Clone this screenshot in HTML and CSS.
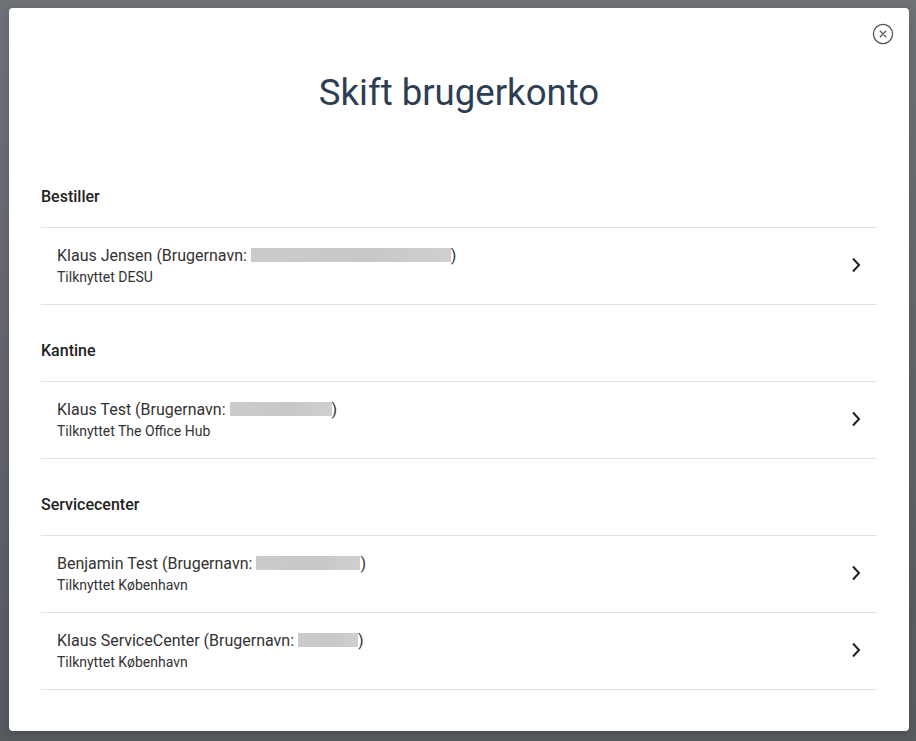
FILE: index.html
```html
<!DOCTYPE html>
<html lang="da">
<head>
<meta charset="utf-8">
<title>Skift brugerkonto</title>
<link rel="stylesheet" href="styles.css">
</head>
<body>
<div class="backdrop">
  <div class="modal" role="dialog" aria-labelledby="modal-title">
    <button class="close" aria-label="Luk">
      <svg width="22" height="22" viewBox="0 0 22 22" fill="none" stroke="#555" stroke-width="1.3" stroke-linecap="round">
        <circle cx="11" cy="11" r="9.6"/>
        <path d="M8.3 8.3l5.4 5.4M13.7 8.3l-5.4 5.4"/>
      </svg>
    </button>
    <h1 class="title" id="modal-title">Skift brugerkonto</h1>

    <section class="group">
      <h2 class="group-title">Bestiller</h2>
      <ul class="accounts">
        <li class="account">
          <div class="account-text">
            <div class="account-name">Klaus Jensen (Brugernavn: <span class="masked masked-lg"></span>)</div>
            <div class="account-org">Tilknyttet DESU</div>
          </div>
          <svg class="chevron" width="10" height="16" viewBox="0 0 10 16"><path d="M2 1.5l6 6.5-6 6.5" fill="none" stroke="#222" stroke-width="2"/></svg>
        </li>
      </ul>
    </section>

    <section class="group">
      <h2 class="group-title">Kantine</h2>
      <ul class="accounts">
        <li class="account">
          <div class="account-text">
            <div class="account-name">Klaus Test (Brugernavn: <span class="masked masked-md"></span>)</div>
            <div class="account-org">Tilknyttet The Office Hub</div>
          </div>
          <svg class="chevron" width="10" height="16" viewBox="0 0 10 16"><path d="M2 1.5l6 6.5-6 6.5" fill="none" stroke="#222" stroke-width="2"/></svg>
        </li>
      </ul>
    </section>

    <section class="group">
      <h2 class="group-title">Servicecenter</h2>
      <ul class="accounts">
        <li class="account">
          <div class="account-text">
            <div class="account-name">Benjamin Test (Brugernavn: <span class="masked masked-sm"></span>)</div>
            <div class="account-org">Tilknyttet København</div>
          </div>
          <svg class="chevron" width="10" height="16" viewBox="0 0 10 16"><path d="M2 1.5l6 6.5-6 6.5" fill="none" stroke="#222" stroke-width="2"/></svg>
        </li>
        <li class="account">
          <div class="account-text">
            <div class="account-name">Klaus ServiceCenter (Brugernavn: <span class="masked masked-xs"></span>)</div>
            <div class="account-org">Tilknyttet København</div>
          </div>
          <svg class="chevron" width="10" height="16" viewBox="0 0 10 16"><path d="M2 1.5l6 6.5-6 6.5" fill="none" stroke="#222" stroke-width="2"/></svg>
        </li>
      </ul>
    </section>
  </div>
</div>
</body>
</html>
```
FILE: styles.css
```css
* {
  box-sizing: border-box;
}

html, body {
  margin: 0;
  padding: 0;
  height: 100%;
}

body {
  font-family: Roboto, "Liberation Sans", Arial, sans-serif;
  color: #333;
  background: linear-gradient(180deg, #6e7176 0%, #626569 50%, #56595d 100%);
}

.backdrop {
  padding: 8px 7px 0 9px;
  height: 741px;
  overflow: hidden;
}

.modal {
  position: relative;
  width: 900px;
  height: 723px;
  background: #fff;
  border-radius: 4px;
  padding: 0 32px 42px;
  box-shadow: 0 2px 8px rgba(0, 0, 0, 0.15);
}

.close {
  position: absolute;
  top: 15px;
  right: 15px;
  width: 22px;
  height: 22px;
  padding: 0;
  border: 0;
  background: none;
  cursor: pointer;
  display: flex;
}

.title {
  margin: 0;
  padding-top: 63px;
  height: 133px;
  line-height: 44px;
  font-size: 36.6px;
  font-weight: 400;
  text-align: center;
  color: #2e3e52;
}

.group-title {
  margin: 0;
  padding: 44px 0 18px;
  font-size: 16px;
  line-height: 24px;
  font-weight: 500;
  color: #222;
}

.group:not(:first-of-type) .group-title {
  padding: 34px 0 18px;
}

.accounts {
  list-style: none;
  margin: 0;
  padding: 0;
  border-top: 1px solid #e2e2e2;
}

.account {
  display: flex;
  align-items: center;
  justify-content: space-between;
  padding: 17px 16px 17px;
  border-bottom: 1px solid #e2e2e2;
  cursor: pointer;
}

.account-name {
  font-size: 16px;
  line-height: 22px;
  color: #333;
}

.account-org {
  font-size: 14px;
  line-height: 20px;
  color: #333;
}

.masked {
  display: inline-block;
  height: 14px;
  vertical-align: -1px;
  background: linear-gradient(90deg, #cbcbcb, #c8c8c8 60%, #cfcfcf);
  filter: blur(0.4px);
}

.masked-lg { width: 200px; }
.masked-md { width: 102px; }
.masked-sm { width: 104px; }
.masked-xs { width: 60px; }

.chevron {
  flex: none;
  margin-top: -2px;
}
```
